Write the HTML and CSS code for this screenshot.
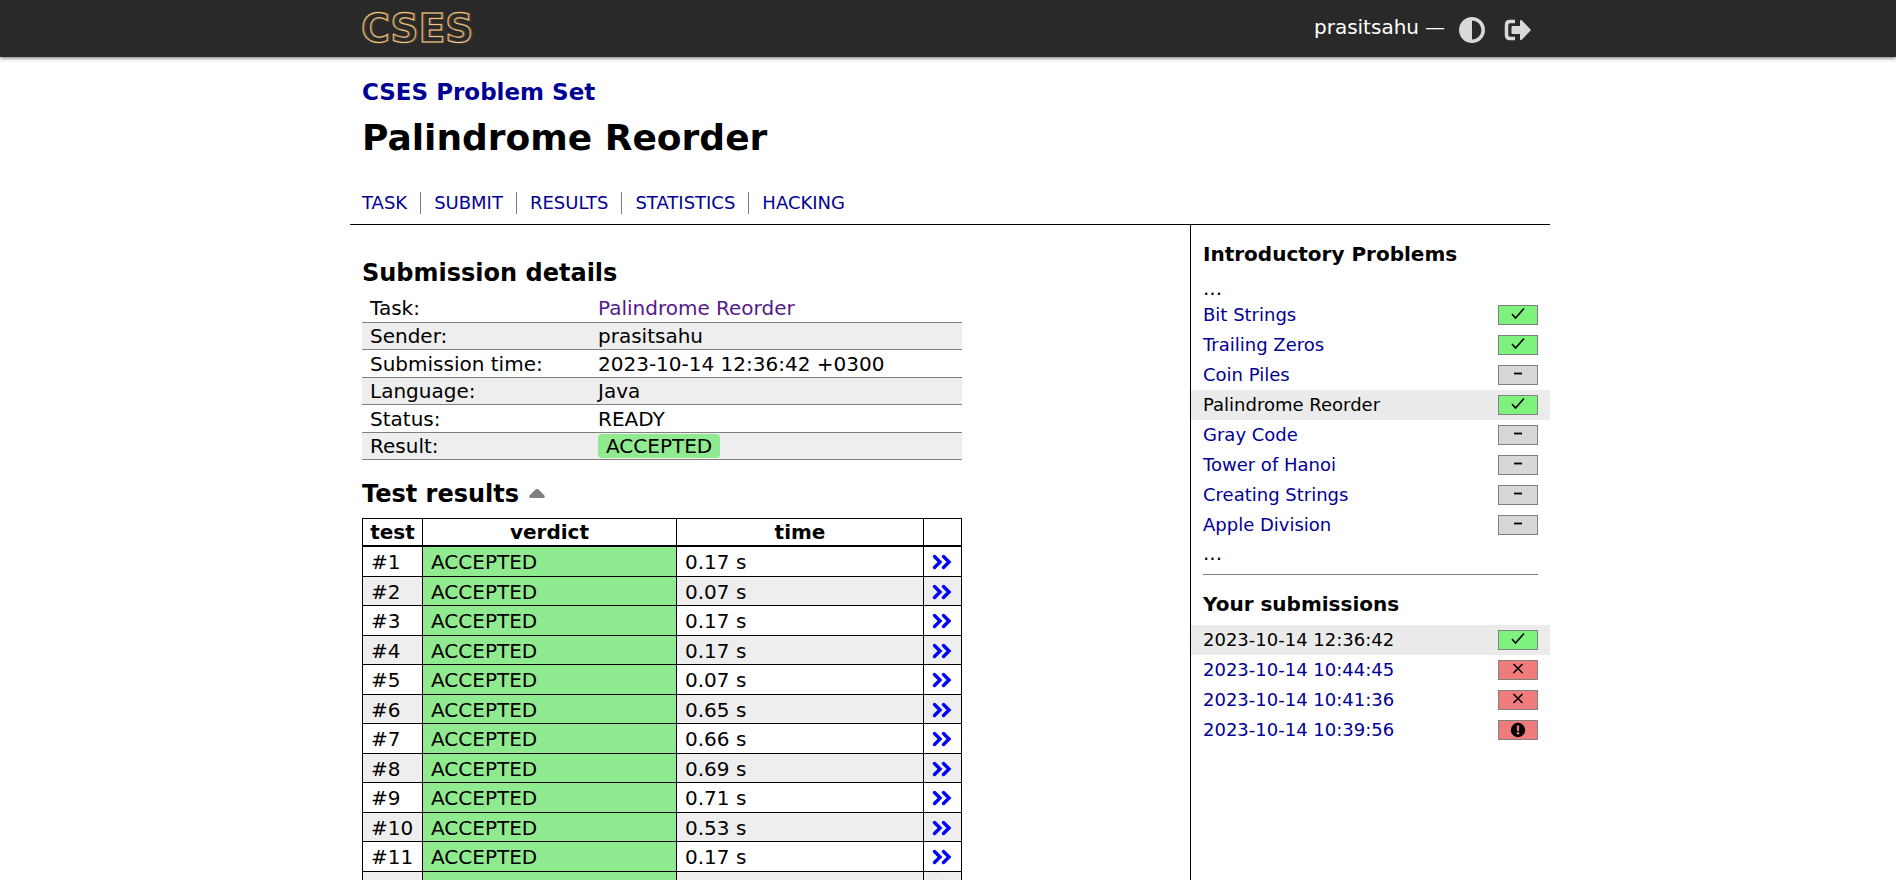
FILE: index.html
```html
<!DOCTYPE html>
<html lang="en">
<head>
<meta charset="utf-8">
<meta name="viewport" content="width=device-width, initial-scale=1">
<title>CSES - Palindrome Reorder</title>
<link rel="stylesheet" href="styles.css">
</head>
<body>
<svg class="sprites" aria-hidden="true">
  <symbol id="angles" viewBox="0 0 20 16"><path d="M2.5 2.5 8 8l-5.500 5.500M11.500 2.500 17 8l-5.500 5.500" fill="none" stroke="currentColor" stroke-width="3.400" stroke-linecap="round"/></symbol>
  <symbol id="check" viewBox="0 0 16 16"><path d="m2 8 3.500 4L14 2.500" fill="none" stroke="currentColor" stroke-width="1.600"/></symbol>
  <symbol id="dash" viewBox="0 0 16 16"><path d="M4 7.500h8" stroke="currentColor" stroke-width="1.800"/></symbol>
  <symbol id="cross" viewBox="0 0 16 16"><path d="m3.500 3 9 9m0-9-9 9" stroke="currentColor" stroke-width="1.600"/></symbol>
  <symbol id="alert" viewBox="0 0 16 16"><circle cx="8" cy="8" r="7.200" fill="currentColor"/><path d="M6.700 3.500h2.600L9 9H7z" fill="#f07b7b"/><circle cx="8" cy="11.300" r="1.300" fill="#f07b7b"/></symbol>
</svg>

<header class="topbar">
  <div class="topbar-inner">
    <a class="logo" href="#" aria-label="CSES">
      <svg width="120" height="48" viewBox="0 0 120 48">
        <defs><linearGradient id="gold" x1="0" y1="0" x2="1" y2="1"><stop offset="0" stop-color="#f0cf8c"/><stop offset=".75" stop-color="#e6c88c"/><stop offset="1" stop-color="#f4f0ec"/></linearGradient></defs>
        <text class="logo-depth" x="0" y="37">CSES</text>
        <text class="logo-line" x="-1" y="37">CSES</text>
      </svg>
    </a>
    <div class="controls">
      <a class="user" href="#">prasitsahu</a>
      <span>—</span>
      <button class="icon-button" type="button" aria-label="Toggle theme">
        <svg width="26" height="26" viewBox="0 0 26 26"><circle cx="13" cy="13" r="11.200" fill="none" stroke="currentColor" stroke-width="3.500"/><path d="M13 1v24a12 12 0 0 1 0-24z" fill="currentColor"/></svg>
      </button>
      <a class="icon-button" href="#" aria-label="Log out">
        <svg width="28" height="22" viewBox="0 0 28 22"><path d="M11 2.500H6Q2.500 2.500 2.500 6v10q0 3.500 3.500 3.500h5" fill="none" stroke="currentColor" stroke-width="3.500"/><path d="M8.500 7H16V1.500q1-1 2 0L27 11l-9 9.500q-1 1-2 0V15H8.500Q7.500 15 7.500 14V8q0-1 1-1z" fill="currentColor"/></svg>
      </a>
    </div>
  </div>
</header>

<div class="page">
  <div class="title-block">
    <a class="course" href="#">CSES Problem Set</a>
    <h1>Palindrome Reorder</h1>
    <nav class="tabs">
      <a href="#">TASK</a><a href="#">SUBMIT</a><a href="#">RESULTS</a><a href="#">STATISTICS</a><a href="#">HACKING</a>
    </nav>
  </div>

  <div class="columns">
    <main class="content">
      <h2>Submission details</h2>
      <table class="details">
        <tbody>
          <tr><th scope="row">Task:</th><td><a class="visited" href="#">Palindrome Reorder</a></td></tr>
          <tr><th scope="row">Sender:</th><td>prasitsahu</td></tr>
          <tr><th scope="row">Submission time:</th><td>2023-10-14 12:36:42 +0300</td></tr>
          <tr><th scope="row">Language:</th><td>Java</td></tr>
          <tr><th scope="row">Status:</th><td>READY</td></tr>
          <tr><th scope="row">Result:</th><td><span class="verdict">ACCEPTED</span></td></tr>
        </tbody>
      </table>

      <h2 class="results-title">Test results <button class="caret" type="button" aria-label="Collapse test results"><svg width="16" height="9" viewBox="0 0 16 9"><path d="M8 0q1 0 2 1l5 5q2 3-1 3H2q-3 0-1-3l5-5q1-1 2-1z" fill="currentColor"/></svg></button></h2>
      <table class="tests">
        <colgroup><col class="c-test"><col class="c-verdict"><col class="c-time"><col class="c-more"></colgroup>
        <thead><tr><th>test</th><th>verdict</th><th>time</th><th></th></tr></thead>
        <tbody>
          <tr><td>#1</td><td class="ok">ACCEPTED</td><td>0.17 s</td><td><a href="#" aria-label="Test 1"><svg width="20" height="16"><use href="#angles"/></svg></a></td></tr>
          <tr><td>#2</td><td class="ok">ACCEPTED</td><td>0.07 s</td><td><a href="#" aria-label="Test 2"><svg width="20" height="16"><use href="#angles"/></svg></a></td></tr>
          <tr><td>#3</td><td class="ok">ACCEPTED</td><td>0.17 s</td><td><a href="#" aria-label="Test 3"><svg width="20" height="16"><use href="#angles"/></svg></a></td></tr>
          <tr><td>#4</td><td class="ok">ACCEPTED</td><td>0.17 s</td><td><a href="#" aria-label="Test 4"><svg width="20" height="16"><use href="#angles"/></svg></a></td></tr>
          <tr><td>#5</td><td class="ok">ACCEPTED</td><td>0.07 s</td><td><a href="#" aria-label="Test 5"><svg width="20" height="16"><use href="#angles"/></svg></a></td></tr>
          <tr><td>#6</td><td class="ok">ACCEPTED</td><td>0.65 s</td><td><a href="#" aria-label="Test 6"><svg width="20" height="16"><use href="#angles"/></svg></a></td></tr>
          <tr><td>#7</td><td class="ok">ACCEPTED</td><td>0.66 s</td><td><a href="#" aria-label="Test 7"><svg width="20" height="16"><use href="#angles"/></svg></a></td></tr>
          <tr><td>#8</td><td class="ok">ACCEPTED</td><td>0.69 s</td><td><a href="#" aria-label="Test 8"><svg width="20" height="16"><use href="#angles"/></svg></a></td></tr>
          <tr><td>#9</td><td class="ok">ACCEPTED</td><td>0.71 s</td><td><a href="#" aria-label="Test 9"><svg width="20" height="16"><use href="#angles"/></svg></a></td></tr>
          <tr><td>#10</td><td class="ok">ACCEPTED</td><td>0.53 s</td><td><a href="#" aria-label="Test 10"><svg width="20" height="16"><use href="#angles"/></svg></a></td></tr>
          <tr><td>#11</td><td class="ok">ACCEPTED</td><td>0.17 s</td><td><a href="#" aria-label="Test 11"><svg width="20" height="16"><use href="#angles"/></svg></a></td></tr>
          <tr><td>#12</td><td class="ok">ACCEPTED</td><td>0.17 s</td><td><a href="#" aria-label="Test 12"><svg width="20" height="16"><use href="#angles"/></svg></a></td></tr>
        </tbody>
      </table>
    </main>

    <aside class="sidebar">
      <h3>Introductory Problems</h3>
      <div class="more">...</div>
      <ul class="list">
        <li><a href="#">Bit Strings</a><span class="badge full"><svg width="16" height="16"><use href="#check"/></svg></span></li>
        <li><a href="#">Trailing Zeros</a><span class="badge full"><svg width="16" height="16"><use href="#check"/></svg></span></li>
        <li><a href="#">Coin Piles</a><span class="badge"><svg width="16" height="16"><use href="#dash"/></svg></span></li>
        <li class="current"><a href="#">Palindrome Reorder</a><span class="badge full"><svg width="16" height="16"><use href="#check"/></svg></span></li>
        <li><a href="#">Gray Code</a><span class="badge"><svg width="16" height="16"><use href="#dash"/></svg></span></li>
        <li><a href="#">Tower of Hanoi</a><span class="badge"><svg width="16" height="16"><use href="#dash"/></svg></span></li>
        <li><a href="#">Creating Strings</a><span class="badge"><svg width="16" height="16"><use href="#dash"/></svg></span></li>
        <li><a href="#">Apple Division</a><span class="badge"><svg width="16" height="16"><use href="#dash"/></svg></span></li>
      </ul>
      <div class="more">...</div>
      <hr>
      <h3>Your submissions</h3>
      <ul class="list">
        <li class="current"><a href="#">2023-10-14 12:36:42</a><span class="badge full"><svg width="16" height="16"><use href="#check"/></svg></span></li>
        <li><a href="#">2023-10-14 10:44:45</a><span class="badge zero"><svg width="16" height="16"><use href="#cross"/></svg></span></li>
        <li><a href="#">2023-10-14 10:41:36</a><span class="badge zero"><svg width="16" height="16"><use href="#cross"/></svg></span></li>
        <li><a href="#">2023-10-14 10:39:56</a><span class="badge zero alert"><svg width="16" height="16"><use href="#alert"/></svg></span></li>
      </ul>
    </aside>
  </div>
</div>
</body>
</html>
```
FILE: styles.css
```css
* { box-sizing: border-box; }
html { scrollbar-width: none; }
body {
  margin: 0;
  background: #fff;
  color: #000;
  font: 20px/24px Verdana, "DejaVu Sans", sans-serif;
}
a { color: #000094; text-decoration: none; }
svg { display: block; }
h1, h2, h3 { margin: 0; font-weight: bold; }
ul { margin: 0; padding: 0; list-style: none; }
button { padding: 0; border: 0; background: none; cursor: pointer; }
.sprites { display: none; }

.topbar { background: #292929; box-shadow: 0 1px 4px rgba(0, 0, 0, .6); padding-left: 4px; }
.topbar-inner {
  display: flex;
  align-items: center;
  justify-content: space-between;
  max-width: 1200px;
  height: 57px;
  margin: 0 auto;
  padding: 0 18px 0 12px;
}
.logo svg { overflow: visible; }
.logo svg text { font: bold 39px "DejaVu Sans", sans-serif; fill: none; }
.logo-depth { stroke: #6b4a2b; stroke-width: 2px; }
.logo .logo-line { stroke: url(#gold); stroke-width: 1px; }
.controls { display: flex; align-items: flex-start; gap: 6px; color: #fff; }
.user { color: #fff; }
.icon-button { margin: 2px 0 0 8px; color: #d9d9d9; }
.icon-button + .icon-button { margin: 4px 0 0 13px; }

.page { padding-left: 4px; }
.title-block, .columns { max-width: 1200px; margin: 0 auto; }
.title-block { padding: 21px 12px 10px; border-bottom: 1px solid #000; }
.course { display: block; font-size: 23px; line-height: 28px; font-weight: bold; }
h1 { margin: 10px 0 32px; font-size: 36px; line-height: 44px; }
.tabs { display: flex; flex-wrap: wrap; font-size: 18px; line-height: 22px; }
.tabs a { padding: 0 13px; border-left: 1px solid #808080; }
.tabs a:first-child { padding-left: 0; border-left: 0; }

.columns { display: flex; align-items: stretch; }
.content { flex: 1; min-width: 0; padding: 32px 12px 24px; }
h2 { font-size: 24px; line-height: 32px; }
table { width: 100%; max-width: 600px; border-collapse: collapse; table-layout: fixed; }

.details { margin-top: 5px; }
.details th, .details td { height: 27px; padding: 1px 8px 0; text-align: left; font-weight: normal; border-bottom: 1px solid #808080; }
.details tr:nth-child(odd) > * { height: 28px; }
.details th { width: 236px; }
.details td { padding: 1px 0 0; }
.details tr:nth-child(even) { background: #eee; }
.visited { color: #551a8b; }
.verdict { display: block; width: max-content; padding: 0 8px; border-radius: 4px; background: #90ea90; }

.results-title { display: flex; align-items: center; gap: 10px; margin: 18px 0 8px; }
.caret { color: #808080; }

.c-test { width: 60px; }
.c-verdict { width: 254px; }
.c-more { width: 38px; }
.tests th, .tests td { height: 29px; padding: 2px 8px 0; border: 1px solid #000; }
.tests th { height: 28px; padding: 1px 0 0; border-bottom-width: 2px; }
.tests tr:nth-child(odd) td { height: 30px; }
.tests tbody tr:nth-child(even) { background: #eee; }
.tests .ok { background: #90ea90; }
.tests td a { color: #00f; }

.sidebar { width: 360px; padding: 15px 12px 24px; border-left: 1px solid #000; }
h3 { font-size: 20px; line-height: 28px; }
.more { height: 24px; }
h3 + .more { margin-top: 8px; }
.list { margin: 0 -12px; font-size: 18px; }
.list + .more { padding-top: 1px; }
h3 + .list { margin-top: 7px; }
.list li { display: flex; align-items: center; justify-content: space-between; height: 30px; padding: 0 12px; }
.list .current { background: #ebebeb; }
.current a { color: #000; }
.badge {
  display: flex;
  align-items: flex-start;
  justify-content: center;
  width: 40px;
  height: 20px;
  border: 1px solid #808080;
  background: #d7d7d7;
}
.badge.full { background: #7df27d; }
.badge.zero { background: #f07b7b; }
.badge.alert { align-items: center; }
hr { margin: 10px 0 15px; border: 0; border-top: 1px solid #808080; }
```
